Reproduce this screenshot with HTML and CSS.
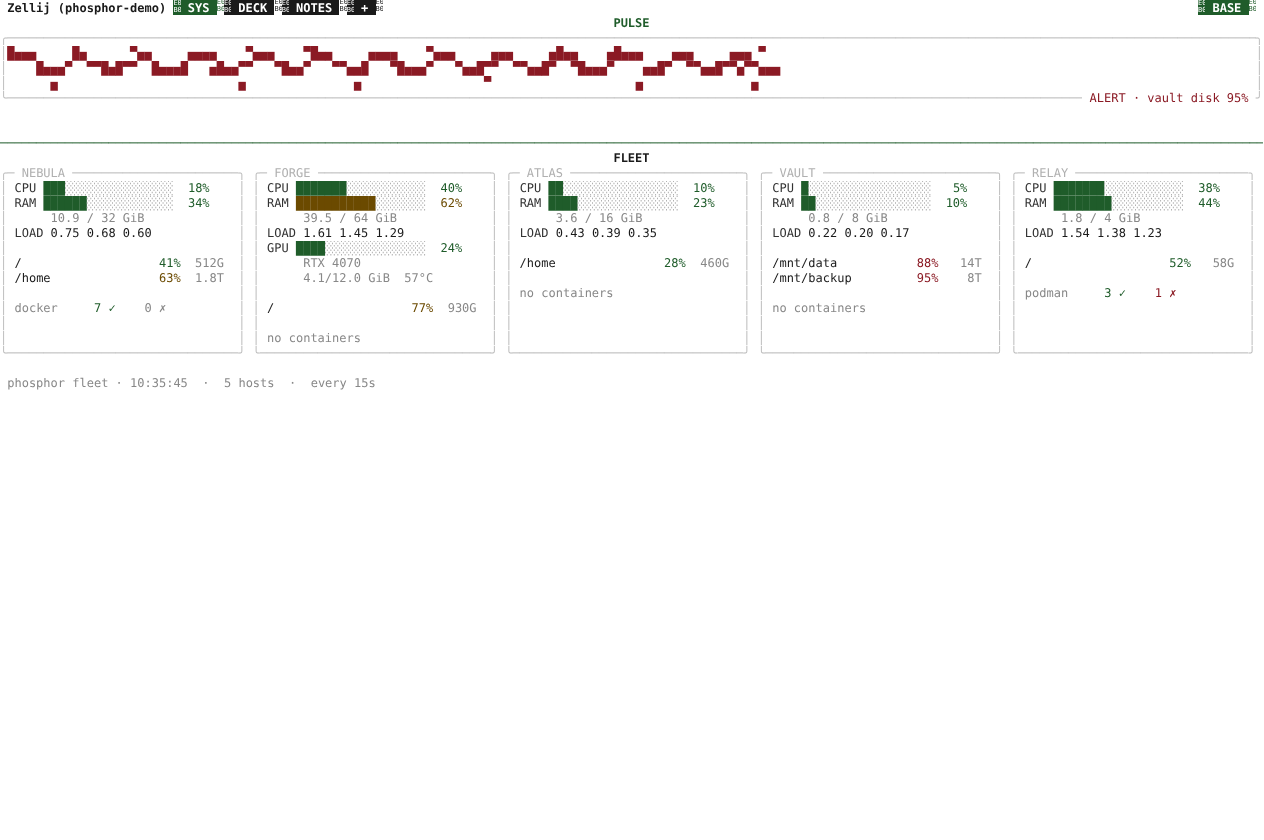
FILE: index.html
```html
<!DOCTYPE html>
<html lang="en">
<head>
    <meta charset="UTF-8">
    <title>Zellij (phosphor-demo)</title>
    <link rel="stylesheet" href="styles.css">
</head>
<body>
<div class="term">
    <div class="tabbar">
        <b class="session"> Zellij (phosphor-demo) </b>
        <span class="tab on"><i class="sep">E0
B0</i> SYS </span><i class="sep end-on">E0
B0</i>
        <span class="tab"><i class="sep">E0
B0</i> DECK </span><i class="sep end">E0
B0</i>
        <span class="tab"><i class="sep">E0
B0</i> NOTES </span><i class="sep end">E0
B0</i>
        <span class="tab"><i class="sep">E0
B0</i> + </span><i class="sep end">E0
B0</i>
        <span class="tab on mode"><i class="sep">E0
B0</i> BASE </span><i class="sep end-on">E0
B0</i>
    </div>
    <div class="heading green">PULSE</div>

    <div class="edge"><span>╭</span><span class="fill">─────────────────────────────────────────────────────────────────────────────────────────────────────────────────────────────────────────────────────────────────────────────</span><span>╮</span></div>
    <div class="ln"><span class="red"><span class="blk">█▄▄▄     █▄      ▀▄▄     ▄▄▄▄    ▀▄▄▄    ▀█▄▄     ▄▄▄▄    ▀▄▄▄     ▄▄▄     ▄█▄▄    ▄█▄▄▄    ▄▄▄     ▄▄▄ ▀</span></span></div>
    <div class="ln"><span class="red"><span class="blk">    █▄▄▄▀  ▀▀█▄█▀▀  █▄▄▄█   ▄█▄▄▀▀   ▀█▄▄▀   ▀▀▄▄█   ▀█▄▄▄▀   ▀▄▄█▀▀  ▀▀▄▄█▀  ▀█▄▄▄▀    ▄▄█▀  ▀▀▄▄█▀▀▄▀▀▄▄▄</span></span></div>
    <div class="ln"><span class="red"><span class="blk">      ▄                         ▄               ▄                 ▀                    ▄               ▄</span></span></div>
    <div class="edge"><span>╰</span><span class="fill">─────────────────────────────────────────────────────────────────────────────────────────────────────────────────────────────────────────────────────────</span><span class="red"> ALERT · vault disk 95% </span><span>╯</span></div>

    <div class="blank"></div>
    <div class="blank"></div>
    <div class="divider">────────────────────────────────────────────────────────────────────────────────────────────────────────────────────────────────────────────────────────────────────────────────────</div>
    <div class="heading"><b>FLEET</b></div>

    <div class="fleet">
        <section class="card">
            <div class="edge"><span>╭─ </span><span class="title">NEBULA</span><span> </span><span class="fill">───────────────────────</span><span>╮</span></div>
            <div class="ln"><span> <span class="label">CPU</span> <span class="blk green">███</span><span class="blk track">░░░░░░░░░░░░░░░</span>  <span class="green">18%</span></span></div>
            <div class="ln"><span> <span class="label">RAM</span> <span class="blk green">██████</span><span class="blk track">░░░░░░░░░░░░</span>  <span class="green">34%</span></span></div>
            <div class="ln"><span class="dim">      10.9 / 32 GiB</span></div>
            <div class="ln"><span> <span class="label">LOAD</span> 0.75 0.68 0.60</span></div>
            <div class="ln"></div>
            <div class="ln"><span> /                   <span class="green">41%</span>  <span class="dim">512G</span></span></div>
            <div class="ln"><span> /home               <span class="amber">63%</span>  <span class="dim">1.8T</span></span></div>
            <div class="ln"></div>
            <div class="ln"><span> <span class="dim">docker</span>     <span class="green">7 ✓</span>    <span class="dim">0 ✗</span></span></div>
            <div class="ln"></div>
            <div class="ln"></div>
            <div class="edge"><span>╰</span><span class="fill">────────────────────────────────</span><span>╯</span></div>
        </section>

        <section class="card">
            <div class="edge"><span>╭─ </span><span class="title">FORGE</span><span> </span><span class="fill">────────────────────────</span><span>╮</span></div>
            <div class="ln"><span> <span class="label">CPU</span> <span class="blk green">███████</span><span class="blk track">░░░░░░░░░░░</span>  <span class="green">40%</span></span></div>
            <div class="ln"><span> <span class="label">RAM</span> <span class="blk amber">███████████</span><span class="blk track">░░░░░░░</span>  <span class="amber">62%</span></span></div>
            <div class="ln"><span class="dim">      39.5 / 64 GiB</span></div>
            <div class="ln"><span> <span class="label">LOAD</span> 1.61 1.45 1.29</span></div>
            <div class="ln"><span> <span class="label">GPU</span> <span class="blk green">████</span><span class="blk track">░░░░░░░░░░░░░░</span>  <span class="green">24%</span></span></div>
            <div class="ln"><span class="dim">      RTX 4070</span></div>
            <div class="ln"><span class="dim">      4.1/12.0 GiB  57°C</span></div>
            <div class="ln"></div>
            <div class="ln"><span> /                   <span class="amber">77%</span>  <span class="dim">930G</span></span></div>
            <div class="ln"></div>
            <div class="ln"><span class="dim"> no containers</span></div>
            <div class="edge"><span>╰</span><span class="fill">────────────────────────────────</span><span>╯</span></div>
        </section>

        <section class="card">
            <div class="edge"><span>╭─ </span><span class="title">ATLAS</span><span> </span><span class="fill">────────────────────────</span><span>╮</span></div>
            <div class="ln"><span> <span class="label">CPU</span> <span class="blk green">██</span><span class="blk track">░░░░░░░░░░░░░░░░</span>  <span class="green">10%</span></span></div>
            <div class="ln"><span> <span class="label">RAM</span> <span class="blk green">████</span><span class="blk track">░░░░░░░░░░░░░░</span>  <span class="green">23%</span></span></div>
            <div class="ln"><span class="dim">      3.6 / 16 GiB</span></div>
            <div class="ln"><span> <span class="label">LOAD</span> 0.43 0.39 0.35</span></div>
            <div class="ln"></div>
            <div class="ln"><span> /home               <span class="green">28%</span>  <span class="dim">460G</span></span></div>
            <div class="ln"></div>
            <div class="ln"><span class="dim"> no containers</span></div>
            <div class="ln"></div>
            <div class="ln"></div>
            <div class="ln"></div>
            <div class="edge"><span>╰</span><span class="fill">────────────────────────────────</span><span>╯</span></div>
        </section>

        <section class="card">
            <div class="edge"><span>╭─ </span><span class="title">VAULT</span><span> </span><span class="fill">────────────────────────</span><span>╮</span></div>
            <div class="ln"><span> <span class="label">CPU</span> <span class="blk green">█</span><span class="blk track">░░░░░░░░░░░░░░░░░</span>   <span class="green">5%</span></span></div>
            <div class="ln"><span> <span class="label">RAM</span> <span class="blk green">██</span><span class="blk track">░░░░░░░░░░░░░░░░</span>  <span class="green">10%</span></span></div>
            <div class="ln"><span class="dim">      0.8 / 8 GiB</span></div>
            <div class="ln"><span> <span class="label">LOAD</span> 0.22 0.20 0.17</span></div>
            <div class="ln"></div>
            <div class="ln"><span> /mnt/data           <span class="red">88%</span>   <span class="dim">14T</span></span></div>
            <div class="ln"><span> /mnt/backup         <span class="red">95%</span>    <span class="dim">8T</span></span></div>
            <div class="ln"></div>
            <div class="ln"><span class="dim"> no containers</span></div>
            <div class="ln"></div>
            <div class="ln"></div>
            <div class="edge"><span>╰</span><span class="fill">────────────────────────────────</span><span>╯</span></div>
        </section>

        <section class="card">
            <div class="edge"><span>╭─ </span><span class="title">RELAY</span><span> </span><span class="fill">────────────────────────</span><span>╮</span></div>
            <div class="ln"><span> <span class="label">CPU</span> <span class="blk green">███████</span><span class="blk track">░░░░░░░░░░░</span>  <span class="green">38%</span></span></div>
            <div class="ln"><span> <span class="label">RAM</span> <span class="blk green">████████</span><span class="blk track">░░░░░░░░░░</span>  <span class="green">44%</span></span></div>
            <div class="ln"><span class="dim">      1.8 / 4 GiB</span></div>
            <div class="ln"><span> <span class="label">LOAD</span> 1.54 1.38 1.23</span></div>
            <div class="ln"></div>
            <div class="ln"><span> /                   <span class="green">52%</span>   <span class="dim">58G</span></span></div>
            <div class="ln"></div>
            <div class="ln"><span> <span class="dim">podman</span>     <span class="green">3 ✓</span>    <span class="red">1 ✗</span></span></div>
            <div class="ln"></div>
            <div class="ln"></div>
            <div class="ln"></div>
            <div class="edge"><span>╰</span><span class="fill">────────────────────────────────</span><span>╯</span></div>
        </section>
    </div>

    <div class="blank"></div>
    <div class="status dim"> phosphor fleet · 10:35:45  ·  5 hosts  ·  every 15s</div>
</div>
</body>
</html>
```
FILE: styles.css
```css
body {
    margin: 0;
    background: #fff;
    color: #1a1a1a;
}

.term {
    --cell: 7.217px;
    font-family: "DejaVu Sans Mono", monospace;
    font-size: 12px;
    line-height: 15px;
    width: calc(175 * var(--cell));
    padding-top: 1px;
    text-rendering: geometricPrecision;
    will-change: transform;
}

.tabbar, .heading, .edge, .ln, .blank, .divider, .status {
    height: 15px;
    overflow: hidden;
    white-space: pre;
}

/* tab bar */
.tabbar {
    display: flex;
    margin-top: -1px;
    padding-bottom: 1px;
}
.session {
    font-weight: bold;
    padding-top: 1px;
}
.tab {
    background: #1a1a1a;
    color: #fff;
    font-weight: bold;
    padding-top: 1px;
}
.tab.on { background: #1f5c2a; }
.tab.mode { margin-left: auto; }

/* missing-glyph boxes the terminal draws for its powerline separators */
.sep {
    display: inline-block;
    width: var(--cell);
    height: 15px;
    margin-top: -1px;
    font-size: 7px;
    line-height: 7px;
    font-style: normal;
    font-weight: normal;
    overflow: hidden;
    vertical-align: top;
}
.sep.end { color: #1a1a1a; }
.sep.end-on { color: #1f5c2a; }
.tab.mode + .sep { margin-right: var(--cell); }

.heading {
    text-align: center;
    font-weight: bold;
}

/* boxes drawn from line characters */
.edge, .ln {
    display: flex;
    color: #bbb;
}
.ln { justify-content: space-between; }
.ln::before, .ln::after {
    content: "│";
    display: inline-block;
    transform: scaleY(1.12);
}
.ln > span { flex: 1; color: #1a1a1a; }
.fill {
    flex: 1;
    min-width: 0;
    overflow: hidden;
}
.title { color: #b0b0b0; }

/* block characters stretched to the full cell height */
.blk {
    display: inline-block;
    transform: translateY(-1px) scaleY(1.25);
}

.divider { color: #1f5c2a; }

.fleet {
    display: flex;
    gap: var(--cell);
}
.card { width: calc(34 * var(--cell)); }

.green, .ln > span.green { color: #1f5c2a; }
.amber { color: #6b4a00; }
.red, .ln > span.red { color: #8b1a24; }
.dim, .ln > span.dim { color: #888; }
.label { color: #333; }
.track { color: #aaa; }
```
